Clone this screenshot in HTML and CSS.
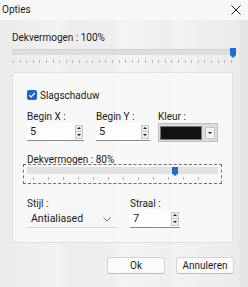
FILE: index.html
```html
<!DOCTYPE html>
<html lang="nl">
<head>
    <meta charset="UTF-8">
    <title>Opties</title>
    <link rel="stylesheet" href="styles.css">
</head>
<body>
    <div class="window">
        <div class="titlebar">
            <span class="title">Opties</span>
            <svg class="close" width="10" height="10" viewBox="0 0 10 10">
                <path d="M0.5 0.5 L9.5 9.5 M9.5 0.5 L0.5 9.5" stroke="#222" stroke-width="1" fill="none"/>
            </svg>
        </div>

        <div class="content">
            <div class="label top-label">Dekvermogen : 100%</div>
            <div class="slider main-slider">
                <div class="track"></div>
                <svg class="thumb" style="left: 218px" width="6" height="10" viewBox="0 0 6 10">
                    <path d="M0 0 H6 V7 L3 10 L0 7 Z" fill="#1c6cd0"/>
                </svg>
                <div class="ticks"></div>
            </div>

            <div class="group">
                <label class="check-row">
                    <span class="checkbox">
                        <svg width="8" height="8" viewBox="0 0 8 8">
                            <path d="M1.3 4.2 L3.2 6 L6.8 2" stroke="#fff" stroke-width="1.2" fill="none"/>
                        </svg>
                    </span>
                    <span>Slagschaduw</span>
                </label>

                <div class="row fields">
                    <div class="field w-x">
                        <div class="label">Begin X :</div>
                        <div class="spin-input">
                            <span class="value">5</span>
                            <span class="spin"><span class="up"></span><span class="down"></span></span>
                        </div>
                    </div>
                    <div class="field w-y">
                        <div class="label">Begin Y :</div>
                        <div class="spin-input">
                            <span class="value">5</span>
                            <span class="spin"><span class="up"></span><span class="down"></span></span>
                        </div>
                    </div>
                    <div class="field w-color">
                        <div class="label">Kleur :</div>
                        <div class="color-combo">
                            <span class="swatch"></span>
                            <span class="drop"><span class="down"></span></span>
                        </div>
                    </div>
                </div>

                <div class="label sub-label">Dekvermogen : 80%</div>
                <div class="slider boxed-slider">
                    <div class="track"></div>
                    <svg class="thumb" style="left: 148px" width="6" height="9" viewBox="0 0 6 9">
                        <path d="M0 0 H6 V6.5 L3 9 L0 6.5 Z" fill="#1c6cd0"/>
                    </svg>
                    <div class="ticks"></div>
                </div>

                <div class="row bottom-fields">
                    <div class="field w-style">
                        <div class="label">Stijl :</div>
                        <div class="combo">
                            <span class="value">Antialiased</span>
                            <svg width="8" height="5" viewBox="0 0 8 5">
                                <path d="M0.5 0.5 L4 4 L7.5 0.5" stroke="#666" stroke-width="0.9" fill="none"/>
                            </svg>
                        </div>
                    </div>
                    <div class="field w-radius">
                        <div class="label">Straal :</div>
                        <div class="spin-input">
                            <span class="value">7</span>
                            <span class="spin"><span class="up"></span><span class="down"></span></span>
                        </div>
                    </div>
                </div>
            </div>

            <div class="buttons">
                <button class="btn btn-ok">Ok</button>
                <button class="btn btn-cancel">Annuleren</button>
            </div>
        </div>
    </div>
</body>
</html>
```

FILE: styles.css
```css
* {
    box-sizing: border-box;
}

body {
    margin: 0;
    width: 248px;
    height: 287px;
    overflow: hidden;
    font-family: Roboto, "Noto Sans", sans-serif;
    font-size: 10px;
    color: #1b1b1b;
    background: #e9e9e9;
}

.window {
    height: 287px;
    background:
        linear-gradient(90deg,
            rgba(255,255,255,0) 0px, rgba(255,255,255,0.35) 60px, rgba(255,255,255,0.1) 70px,
            rgba(255,255,255,0.2) 115px, rgba(255,255,255,0.45) 120px, rgba(255,255,255,0.2) 170px,
            rgba(255,255,255,0.35) 175px, rgba(0,0,0,0) 238px, rgba(0,0,0,0.03) 241px),
        #ebebeb;
}

.titlebar {
    height: 20px;
    display: flex;
    align-items: center;
    justify-content: space-between;
    padding: 0 7px 1px 2px;
    background: #f7f7f7;
}

.title {
    font-size: 10px;
    line-height: 14px;
}

.close {
    margin-top: 1px;
}

.content {
    padding: 0 15px 0 12px;
}

.label {
    line-height: 13px;
    white-space: nowrap;
}

.top-label {
    margin-top: 11px;
    line-height: 14px;
}

.slider {
    position: relative;
}

.main-slider {
    height: 25px;
    margin-top: 2px;
}

.main-slider .track {
    position: absolute;
    left: 0;
    right: 0;
    top: 2px;
    height: 6px;
    background: #dddddd;
    border-top: 1px solid #d0d0d0;
}

.thumb {
    position: absolute;
    top: 0;
}

.main-slider .thumb {
    top: 1px;
}

.ticks {
    position: absolute;
    left: 1px;
    right: 0;
    height: 3px;
    background: repeating-linear-gradient(90deg, #b9b9b9 0, #b9b9b9 1px, transparent 1px, transparent 6.6px);
}

.main-slider .ticks {
    top: 13px;
}

.group {
    height: 171px;
    background: rgba(250, 250, 250, 0.75);
    border: 1px solid #e2e2e2;
    border-radius: 2px;
    padding: 16px 10px 0 14px;
}

.check-row {
    display: flex;
    align-items: center;
    gap: 3px;
    height: 12px;
}

.checkbox {
    width: 10px;
    height: 10px;
    border-radius: 2px;
    background: #1a67c6;
    display: flex;
    align-items: center;
    justify-content: center;
}

.checkbox svg {
    display: block;
}

.row {
    display: flex;
}

.fields {
    margin-top: 9px;
}

.w-x {
    width: 69px;
}

.w-y {
    width: 62px;
}

.w-color {
    width: 60px;
}

.spin-input {
    position: relative;
    height: 18px;
    display: flex;
    align-items: center;
    justify-content: space-between;
    background: #fdfdfd;
    border-bottom: 1px solid #8a8a8a;
    padding: 0 1px 0 3px;
    font-size: 11px;
}

.w-x .spin-input {
    width: 57px;
}

.w-y .spin-input {
    width: 54px;
}

.w-radius .spin-input {
    width: 50px;
}

.spin {
    display: flex;
    flex-direction: column;
    width: 8px;
    height: 14px;
    border: 1px solid #c9c9c9;
    background: #ececec;
}

.spin .up,
.spin .down {
    flex: 1;
    position: relative;
}

.spin .up {
    border-bottom: 1px solid #c9c9c9;
}

.up::after,
.down::after {
    content: "";
    position: absolute;
    left: 50%;
    top: 50%;
    margin-left: -2px;
    border-left: 2px solid transparent;
    border-right: 2px solid transparent;
}

.up::after {
    margin-top: -1px;
    border-bottom: 2px solid #222;
}

.down::after {
    margin-top: -1px;
    border-top: 2px solid #222;
}

.color-combo {
    width: 60px;
    height: 19px;
    display: flex;
    align-items: center;
    gap: 3px;
    padding: 0 2px 0 1px;
    background: #dcdcdc;
    border: 1px solid #bdbdbd;
}

.swatch {
    width: 43px;
    height: 14px;
    background: #111;
    border: 1px solid #777;
}

.drop {
    position: relative;
    width: 10px;
    height: 12px;
    background: #f2f2f2;
    border: 1px solid #c6c6c6;
}

.sub-label {
    margin-top: 11px;
}

.boxed-slider {
    margin-top: -2px;
    margin-left: -4px;
    width: 199px;
    height: 20px;
    border: 1px dashed #6f6f6f;
    padding: 0 3px;
}

.boxed-slider .track {
    position: absolute;
    left: 3px;
    right: 3px;
    top: 2px;
    height: 7px;
    background: #e1e1e1;
}

.boxed-slider .thumb {
    top: 2px;
}

.boxed-slider .ticks {
    top: 12px;
    left: 9px;
    right: 8px;
    background: repeating-linear-gradient(90deg, #b5b5b5 0, #b5b5b5 1px, transparent 1px, transparent 15px);
}

.bottom-fields {
    margin-top: 13px;
}

.w-style {
    width: 103px;
}

.combo {
    width: 90px;
    height: 18px;
    display: flex;
    align-items: center;
    justify-content: space-between;
    padding: 0 6px 0 4px;
    background: #f6f6f6;
    border-bottom: 1px solid #d6d6d6;
    font-size: 10.5px;
}

.combo svg {
    display: block;
    margin-top: 1px;
}

.buttons {
    display: flex;
    justify-content: flex-end;
    gap: 11px;
    margin-top: 14px;
    margin-right: -1px;
}

.btn {
    height: 17px;
    padding: 0;
    font-family: inherit;
    font-size: 10px;
    line-height: 14px;
    color: #1b1b1b;
    background: #fbfbfb;
    border: 1px solid #d4d4d4;
    border-bottom-color: #bdbdbd;
    border-radius: 3px;
}

.btn-ok {
    width: 58px;
}

.btn-cancel {
    width: 58px;
}
```
